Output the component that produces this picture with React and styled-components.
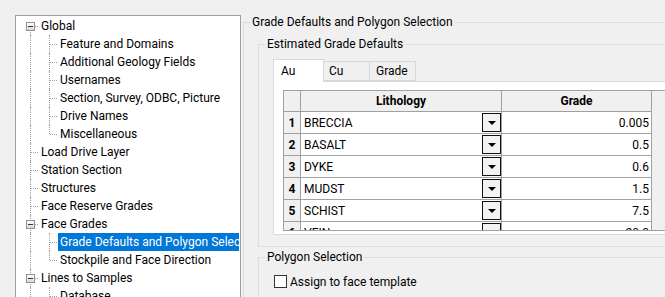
import React from "react";
import styled, { createGlobalStyle, css } from "styled-components";

const GlobalStyle = createGlobalStyle`
  html, body {
    margin: 0;
    padding: 0;
    background: #f0f0f0;
    overflow: hidden;
  }
  body {
    font-family: Roboto, "Noto Sans", sans-serif;
    font-size: 12px;
    color: #000;
  }
`;

const Window = styled.div`
  width: 665px;
  height: 297px;
  overflow: hidden;
  display: flex;
  align-items: flex-start;
`;

/* ---------- tree ---------- */

const TreePanel = styled.div`
  margin: 15px 0 0 15px;
  width: 224px;
  height: 300px;
  flex-shrink: 0;
  border: 1px solid #a0a0a0;
  background: #fff;
  padding-top: 1px;
  overflow: hidden;
`;

const TreeRow = styled.div`
  display: flex;
  height: 18px;
  padding-left: 4px;
`;

const dots = "1px dotted #a0a0a0";

const Cell = styled.div`
  position: relative;
  width: 19px;
  flex-shrink: 0;

  &::before {
    content: "";
    position: absolute;
    left: 10px;
    top: ${(p) => (p.$kind === "first" ? "9px" : "0")};
    bottom: ${(p) => (p.$kind === "elbow" ? "9px" : "0")};
    border-left: ${dots};
    display: ${(p) => (p.$kind === "blank" ? "none" : "block")};
  }

  &::after {
    content: "";
    position: absolute;
    left: 11px;
    right: 1px;
    top: 9px;
    border-top: ${dots};
    display: ${(p) => (p.$kind === "pipe" || p.$kind === "blank" ? "none" : "block")};
  }
`;

const Toggle = styled.span`
  position: absolute;
  left: 6px;
  top: 5px;
  width: 9px;
  height: 9px;
  box-sizing: border-box;
  border: 1px solid #919191;
  background: linear-gradient(#ffffff, #d8d8d8);
  z-index: 1;

  &::after {
    content: "";
    position: absolute;
    left: 1px;
    top: 3px;
    width: 5px;
    height: 1px;
    background: #1e395b;
  }
`;

const TreeLabel = styled.span`
  min-width: 0;
  margin-right: 1px;
  padding: 0 2px;
  line-height: 18px;
  white-space: nowrap;
  overflow: hidden;
  ${(p) =>
    p.$selected &&
    css`
      background: #0078d7;
      color: #fff;
    `}
`;

const treeItems = [
  { label: "Global", cells: ["first"], open: true },
  { label: "Feature and Domains", cells: ["pipe", "tee"] },
  { label: "Additional Geology Fields", cells: ["pipe", "tee"] },
  { label: "Usernames", cells: ["pipe", "tee"] },
  { label: "Section, Survey, ODBC, Picture", cells: ["pipe", "tee"] },
  { label: "Drive Names", cells: ["pipe", "tee"] },
  { label: "Miscellaneous", cells: ["pipe", "elbow"] },
  { label: "Load Drive Layer", cells: ["tee"] },
  { label: "Station Section", cells: ["tee"] },
  { label: "Structures", cells: ["tee"] },
  { label: "Face Reserve Grades", cells: ["tee"] },
  { label: "Face Grades", cells: ["tee"], open: true },
  { label: "Grade Defaults and Polygon Selection", cells: ["pipe", "tee"], selected: true },
  { label: "Stockpile and Face Direction", cells: ["pipe", "elbow"] },
  { label: "Lines to Samples", cells: ["tee"], open: true },
  { label: "Database", cells: ["pipe", "tee"] },
];

/* ---------- group boxes ---------- */

const Content = styled.div`
  margin: 14px 0 0 2px;
  width: 440px;
  flex-shrink: 0;
`;

const GroupBox = styled.fieldset`
  margin: ${(p) => p.$top || 0}px 0 0 0;
  padding: 0;
  min-width: 0;
  border: 1px solid #dcdcdc;
`;

const Legend = styled.legend`
  margin-left: 6px;
  padding: 0 2px;
  line-height: 16px;
  font-size: 12px;
`;

const GroupBody = styled.div`
  padding: ${(p) => p.$pad};
`;

/* ---------- tabs ---------- */

const TabStrip = styled.div`
  display: flex;
  align-items: flex-end;
  height: 22px;
  position: relative;
  z-index: 1;
`;

const Tab = styled.div`
  box-sizing: border-box;
  width: ${(p) => p.$w}px;
  height: ${(p) => (p.$active ? 23 : 20)}px;
  margin-bottom: ${(p) => (p.$active ? -1 : 0)}px;
  padding-left: ${(p) => p.$pl}px;
  border: 1px solid #d9d9d9;
  border-bottom: ${(p) => (p.$active ? "none" : "1px solid #d9d9d9")};
  ${(p) => !p.$active && "border-left: none;"}
  background: ${(p) => (p.$active ? "#fff" : "#f0f0f0")};
  display: flex;
  align-items: center;
`;

const TabPage = styled.div`
  border: 1px solid #d9d9d9;
  background: #fff;
  padding: 8px 0 3px 9px;
`;

/* ---------- grid ---------- */

const line = "#a0a0a0";

const DataGrid = styled.div`
  box-sizing: border-box;
  height: 141px;
  overflow: hidden;
  display: grid;
  grid-template-columns: 17px 201px 150px 1fr;
  grid-template-rows: 21px repeat(6, 22px);
  border: 1px solid ${line};
  border-right: none;
  background: #f0f0f0;
`;

const GridCell = styled.div`
  box-sizing: border-box;
  border-right: 1px solid ${line};
  border-bottom: 1px solid ${line};
  display: flex;
  align-items: center;
  white-space: nowrap;
  overflow: hidden;
`;

const HeaderCell = styled(GridCell)`
  background: #f0f0f0;
  justify-content: center;
  font-weight: bold;
`;

const RowHead = styled(GridCell)`
  background: #f0f0f0;
  justify-content: center;
  font-weight: bold;
`;

const Filler = styled.div``;

const ComboCell = styled(GridCell)`
  background: #fff;
  justify-content: space-between;
  padding-left: 3px;
`;

const NumberCell = styled(GridCell)`
  background: #fff;
  justify-content: flex-end;
  padding-right: 2px;
`;

const DropButton = styled.span`
  box-sizing: border-box;
  width: 19px;
  height: 19px;
  border: 1px solid #111;
  background: #f3f3f3;
  display: flex;
  align-items: center;
  justify-content: center;

  &::after {
    content: "";
    border-left: 4px solid transparent;
    border-right: 4px solid transparent;
    border-top: 4px solid #000;
  }
`;

const rows = [
  ["BRECCIA", "0.005"],
  ["BASALT", "0.5"],
  ["DYKE", "0.6"],
  ["MUDST", "1.5"],
  ["SCHIST", "7.5"],
  ["VEIN", "20.0"],
];

/* ---------- checkbox ---------- */

const CheckRow = styled.label`
  display: flex;
  align-items: center;
  gap: 3px;
  height: 17px;
`;

const CheckBox = styled.span`
  box-sizing: border-box;
  width: 13px;
  height: 13px;
  border: 1px solid #333;
  background: #fff;
`;

export default function App() {
  return (
    <Window>
      <GlobalStyle />
      <TreePanel>
        {treeItems.map((item) => (
          <TreeRow key={item.label}>
            {item.cells.map((kind, i) => (
              <Cell key={i} $kind={kind}>
                {item.open && i === item.cells.length - 1 && <Toggle />}
              </Cell>
            ))}
            <TreeLabel $selected={item.selected}>{item.label}</TreeLabel>
          </TreeRow>
        ))}
      </TreePanel>

      <Content>
        <GroupBox>
          <Legend>Grade Defaults and Polygon Selection</Legend>
          <GroupBody $pad="6px 0 0 14px">
            <GroupBox>
              <Legend>Estimated Grade Defaults</Legend>
              <GroupBody $pad="7px 0 11px 14px">
                <TabStrip>
                  <Tab $active $w={51} $pl={7}>Au</Tab>
                  <Tab $w={46} $pl={5}>Cu</Tab>
                  <Tab $w={46} $pl={6}>Grade</Tab>
                </TabStrip>
                <TabPage>
                  <DataGrid>
                    <HeaderCell />
                    <HeaderCell>Lithology</HeaderCell>
                    <HeaderCell>Grade</HeaderCell>
                    <Filler />
                    {rows.map(([name, value], i) => (
                      <React.Fragment key={name}>
                        <RowHead>{i + 1}</RowHead>
                        <ComboCell>
                          {name}
                          <DropButton />
                        </ComboCell>
                        <NumberCell>{value}</NumberCell>
                        <Filler />
                      </React.Fragment>
                    ))}
                  </DataGrid>
                </TabPage>
              </GroupBody>
            </GroupBox>

            <GroupBox $top={2}>
              <Legend>Polygon Selection</Legend>
              <GroupBody $pad="8px 0 20px 15px">
                <CheckRow>
                  <CheckBox />
                  Assign to face template
                </CheckRow>
              </GroupBody>
            </GroupBox>
          </GroupBody>
        </GroupBox>
      </Content>
    </Window>
  );
}
